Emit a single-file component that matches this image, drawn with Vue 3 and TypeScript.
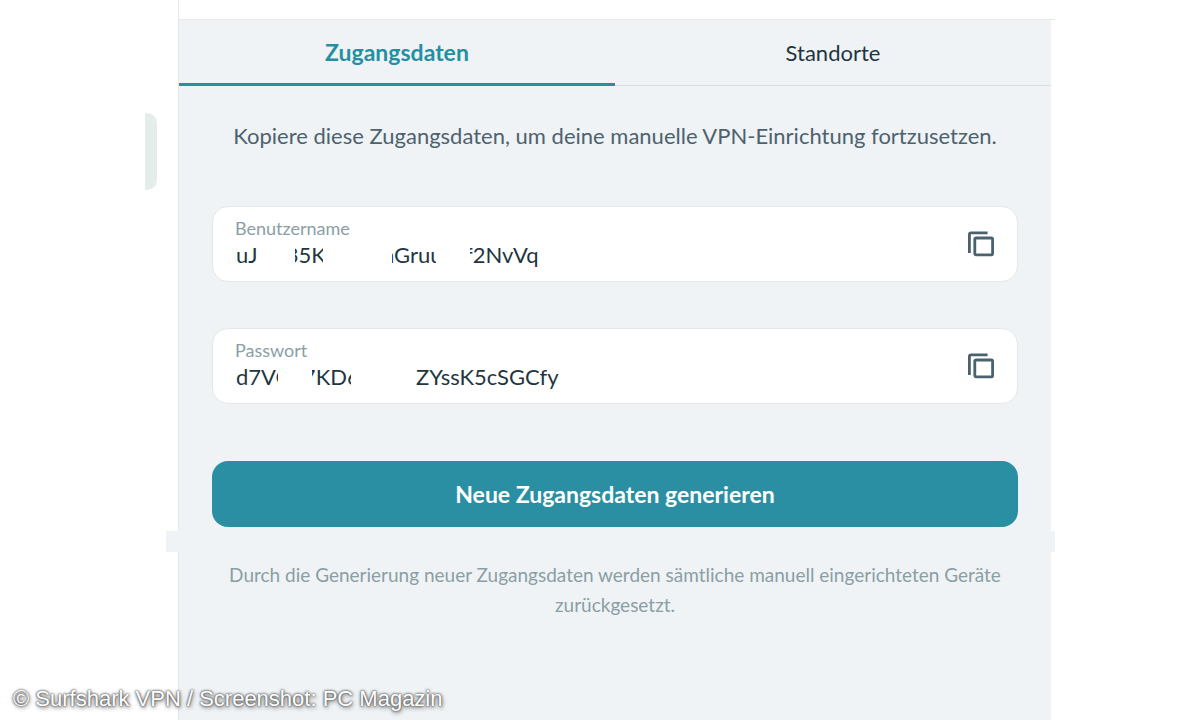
<script setup lang="ts">
import { ref } from 'vue'

interface Mask {
  left: number
  width: number
}
interface Credential {
  id: string
  label: string
  value: string
  masks: Mask[]
}

const activeTab = ref('access')
const tabs = [
  { id: 'access', label: 'Zugangsdaten' },
  { id: 'locations', label: 'Standorte' },
]

const gap = (n: number): string => '\u00a0'.repeat(n)

const credentials: Credential[] = [
  {
    id: 'username',
    label: 'Benutzername',
    value: `uJ${gap(5)}35K${gap(10)}nGruu${gap(4)}f2NvVq`,
    masks: [
      { left: 25, width: 35 },
      { left: 88, width: 69 },
      { left: 201, width: 34 },
    ],
  },
  {
    id: 'password',
    label: 'Passwort',
    value: `d7VG${gap(2)}7KD6${gap(10)}ZYssK5cSGCfy`,
    masks: [
      { left: 43, width: 34 },
      { left: 116, width: 65 },
    ],
  },
]

function copy(value: string): void {
  void navigator.clipboard?.writeText(value)
}
</script>

<template>
  <div class="page">
    <div class="side-tab"></div>
    <main class="panel">
      <div class="top"></div>
      <nav class="tabs" role="tablist">
        <button
          v-for="tab in tabs"
          :key="tab.id"
          class="tab"
          :class="{ active: tab.id === activeTab }"
          type="button"
          role="tab"
          :aria-selected="tab.id === activeTab"
          @click="activeTab = tab.id"
        >
          {{ tab.label }}
        </button>
      </nav>
      <section class="content">
        <p class="intro">Kopiere diese Zugangsdaten, um deine manuelle VPN-Einrichtung fortzusetzen.</p>
        <div class="fields">
          <div v-for="item in credentials" :key="item.id" class="field">
            <div class="field-text">
              <label class="label" :for="item.id">{{ item.label }}</label>
              <div class="value-row">
                <input :id="item.id" class="value" type="text" readonly :value="item.value" />
                <span
                  v-for="(mask, i) in item.masks"
                  :key="i"
                  class="mask"
                  :style="{ left: mask.left + 'px', width: mask.width + 'px' }"
                ></span>
              </div>
            </div>
            <button class="copy" type="button" :aria-label="item.label + ' kopieren'" @click="copy(item.value)">
              <svg viewBox="0 0 28 28" width="28" height="28" fill="none" stroke="#4a626e" stroke-width="2.8">
                <path d="M2.4 23V4.4Q2.4 2.8 4 2.8H20.6" />
                <rect x="7.8" y="8" width="17.8" height="16.8" rx="1.2" />
              </svg>
            </button>
          </div>
        </div>
        <button class="generate" type="button">Neue Zugangsdaten generieren</button>
        <p class="note">
          Durch die Generierung neuer Zugangsdaten werden sämtliche manuell eingerichteten Geräte zurückgesetzt.
        </p>
      </section>
      <div class="band"></div>
    </main>
    <p class="credit">© Surfshark VPN / Screenshot: PC Magazin</p>
  </div>
</template>

<style>
body {
  margin: 0;
  background: #fff;
}
</style>

<style scoped>
.page {
  position: relative;
  display: flex;
  min-height: 100vh;
  box-sizing: border-box;
  padding: 0 149px 0 145px;
  overflow: hidden;
  font-family: Lato, 'Open Sans', sans-serif;
  color: #1f3641;
}
.side-tab {
  flex: none;
  width: 12px;
  height: 77px;
  margin: 113px 21px 0 0;
  border-radius: 0 10px 10px 0;
  background: #e5edeb;
}
.panel {
  position: relative;
  flex: 1;
  min-width: 0;
  box-sizing: border-box;
  border-left: 1px solid #e3eae9;
  background: #eff3f6;
}
.top {
  height: 19px;
  margin-right: -4px;
  background: #fff;
  border-bottom: 1px solid #e5e9ea;
}
.tabs {
  display: flex;
}
.tab {
  flex: 1;
  height: 66px;
  padding: 0;
  border: 0;
  border-bottom: 1px solid #d8e0e4;
  background: none;
  font: 400 22px/28px Lato, sans-serif;
  color: #1f3641;
}
.tab.active {
  border-bottom: 3px solid #2a8fa2;
  font-size: 23px;
  font-weight: 700;
  color: #2290a2;
}
.content {
  padding: 34px 33px 0;
}
.intro {
  margin: 0;
  font-size: 22px;
  line-height: 32px;
  text-align: center;
  color: #4d626d;
}
.fields {
  display: flex;
  flex-direction: column;
  gap: 46px;
  margin-top: 54px;
}
.field {
  display: flex;
  align-items: center;
  box-sizing: border-box;
  height: 76px;
  padding: 0 22px;
  border: 1px solid #e2e8ea;
  border-radius: 16px;
  background: #fff;
}
.field-text {
  flex: 1;
  min-width: 0;
  padding-bottom: 2px;
}
.label {
  display: block;
  font-size: 18px;
  line-height: 24px;
  color: #8b9ea4;
}
.value-row {
  position: relative;
}
.value {
  display: block;
  box-sizing: border-box;
  width: 100%;
  height: 30px;
  padding: 0 1px;
  border: 0;
  outline: 0;
  background: none;
  font: 400 22px/30px Lato, sans-serif;
  color: #1f3641;
}
.mask {
  position: absolute;
  top: 0;
  bottom: 0;
  background: #fff;
}
.copy {
  flex: none;
  display: flex;
  padding: 0;
  border: 0;
  background: none;
}
.generate {
  display: block;
  width: 100%;
  height: 66px;
  margin-top: 57px;
  padding: 0;
  border: 0;
  border-radius: 16px;
  background: #2a8fa2;
  font: 700 23px/28px Lato, sans-serif;
  color: #fff;
}
.note {
  margin: 33px 0 0;
  font-size: 19px;
  line-height: 30px;
  text-align: center;
  color: #8b9ea4;
}
.band {
  position: absolute;
  top: 531px;
  left: -13px;
  right: -4px;
  height: 21px;
  background: #eff3f5;
}
.credit {
  position: absolute;
  left: 13px;
  bottom: 7px;
  margin: 0;
  font: 400 22px/28px 'Liberation Sans', Arial, sans-serif;
  color: #fff;
  text-shadow: 0 0 2px #444, 0 0 3px #666, 1px 2px 4px #777;
}
</style>
